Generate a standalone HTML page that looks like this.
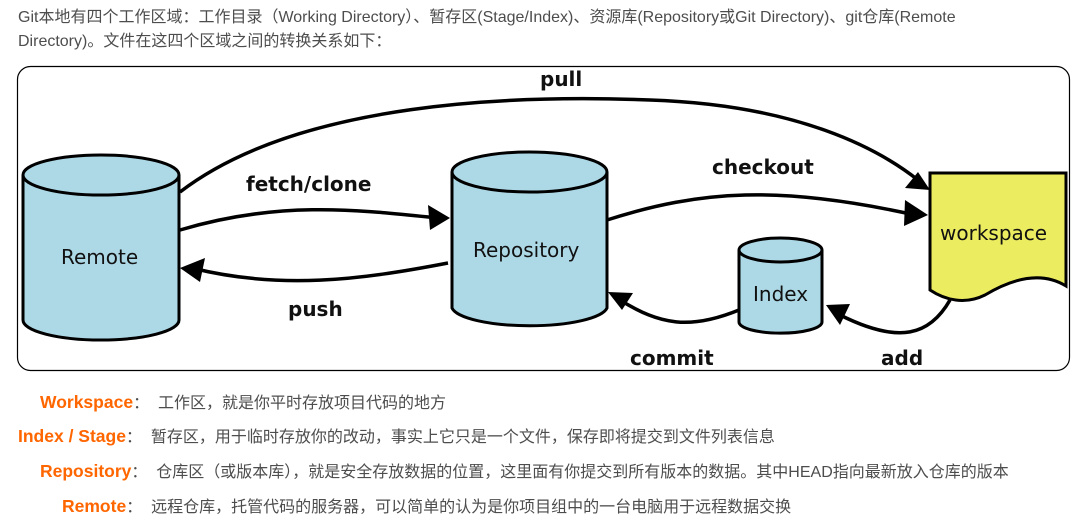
<!DOCTYPE html>
<html><head><meta charset="utf-8"><style>
body{margin:0;width:1086px;height:526px;background:#fff;font-family:"Liberation Sans","Noto Sans CJK SC",sans-serif;color:#333;overflow:hidden}
.p{position:absolute;left:18px;top:6px;width:1010px;font-size:16px;line-height:24px;color:#4d4d4d}
.l{position:absolute;font-size:16px;color:#4d4d4d;white-space:nowrap}
.l b{color:#f60;font-weight:bold;font-size:17.5px}
svg{position:absolute;left:0;top:0}
</style></head><body>
<div class="p">Git本地有四个工作区域：工作目录（Working Directory）、暂存区(Stage/Index)、资源库(Repository或Git Directory)、git仓库(Remote Directory)。文件在这四个区域之间的转换关系如下：</div>
<svg width="1086" height="526" viewBox="0 0 1086 526">
<rect x="17.5" y="66.5" width="1052" height="304" rx="13" fill="#fff" stroke="#000" stroke-width="1.2"/>
<g stroke="#000" stroke-width="3.5" fill="none">
<path d="M180,192 C300,100 520,95 650,100 C800,105 880,150 918,180"/>
<path d="M180,230 C280,200 360,210 438,218"/>
<path d="M448,263 C360,280 280,290 192,268"/>
<path d="M607,220 C700,190 780,185 915,215"/>
<path d="M739,310 C690,330 660,325 620,300"/>
<path d="M950,300 C930,335 900,345 840,315"/>
</g>
<g fill="#000">
<path d="M930,190 L905,188 L918,172 Z"/>
<path d="M450,218 L428,205 L430,230 Z"/>
<path d="M180,268 L205,258 L200,282 Z"/>
<path d="M928,215 L905,200 L904,226 Z"/>
<path d="M608,292 L633,293 L622,310 Z"/>
<path d="M826,305 L850,304 L840,325 Z"/>
</g>
<g stroke="#000" stroke-width="3" fill="#add8e6">
<path d="M23,175 L23,320 A78,20 0 0 0 179,320 L179,175"/>
<ellipse cx="101" cy="175" rx="78" ry="20"/>
<path d="M452,172 L452,308 A78,20 0 0 0 607,308 L607,172"/>
<ellipse cx="529.5" cy="172" rx="77.5" ry="20"/>
<path d="M739,250 L739,322 A41,11 0 0 0 822,322 L822,250"/>
<ellipse cx="780.5" cy="250" rx="41.5" ry="12"/>
</g>
<path d="M930,173 L1066,173 L1066,286 C1040,270 1010,280 985,295 C965,305 945,300 930,290 Z" fill="#ecec60" stroke="#000" stroke-width="3"/>
<g font-family="DejaVu Sans,sans-serif" font-size="20" fill="#111">
<text x="61" y="264">Remote</text>
<text x="473" y="257">Repository</text>
<text x="753" y="301">Index</text>
<text x="940" y="240">workspace</text>
</g>
<g font-family="DejaVu Sans,sans-serif" font-size="20" font-weight="bold" fill="#111">
<text x="540" y="86">pull</text>
<text x="246" y="191">fetch/clone</text>
<text x="712" y="174">checkout</text>
<text x="288" y="316">push</text>
<text x="630" y="365">commit</text>
<text x="881" y="365">add</text>
</g>
</svg>
<div class="l" style="left:40px;top:389px"><b>Workspace</b>：&nbsp; 工作区，就是你平时存放项目代码的地方</div>
<div class="l" style="left:18px;top:423px"><b>Index / Stage</b>：&nbsp; 暂存区，用于临时存放你的改动，事实上它只是一个文件，保存即将提交到文件列表信息</div>
<div class="l" style="left:40px;top:458px"><b>Repository</b>：&nbsp; 仓库区（或版本库），就是安全存放数据的位置，这里面有你提交到所有版本的数据。其中HEAD指向最新放入仓库的版本</div>
<div class="l" style="left:62px;top:493px"><b>Remote</b>：&nbsp; 远程仓库，托管代码的服务器，可以简单的认为是你项目组中的一台电脑用于远程数据交换</div>
</body></html>
